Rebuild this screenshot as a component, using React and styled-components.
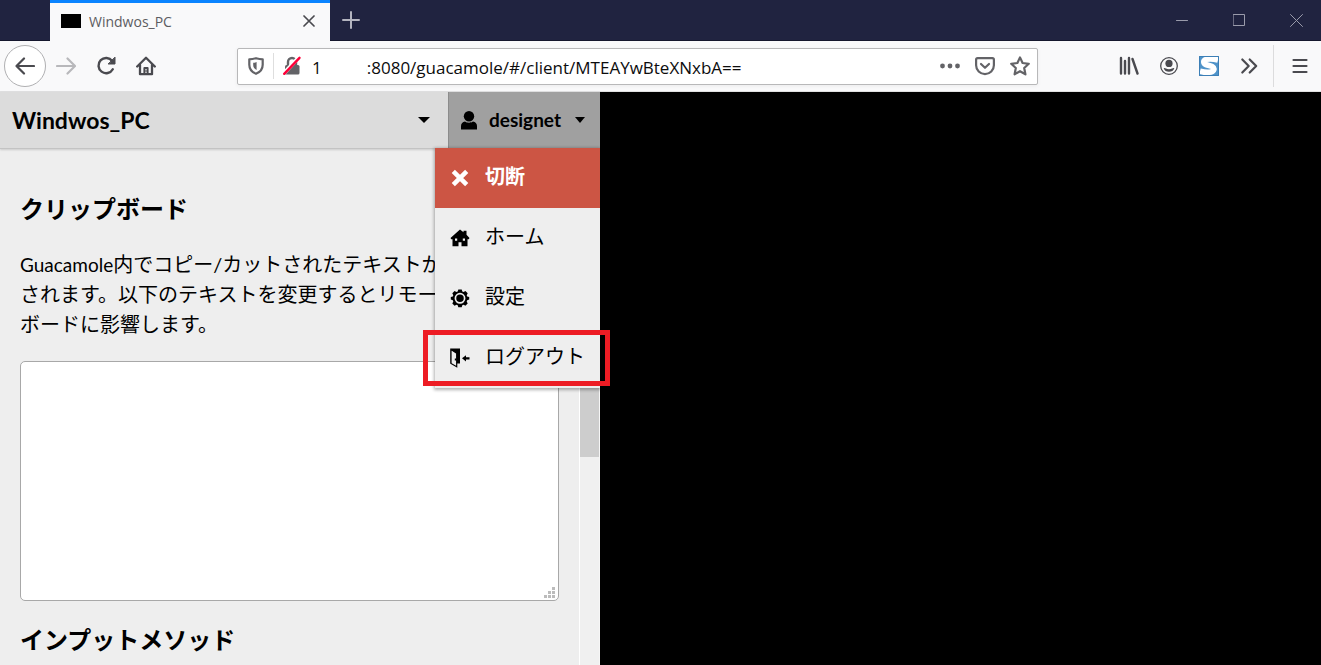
import React from "react";
import styled, { createGlobalStyle, css } from "styled-components";

const GlobalStyle = createGlobalStyle`
  *, *::before, *::after { box-sizing: border-box; }
  body { margin: 0; background: #000; }
  button { margin: 0; padding: 0; border: 0; background: none; color: inherit; font: inherit; cursor: pointer; }
  svg { display: block; flex: none; }
`;

const uiFont = `"Open Sans", "Noto Sans", sans-serif`;
const appFont = `Lato, "Noto Sans CJK JP", sans-serif`;

const Browser = styled.div`
  display: flex;
  flex-direction: column;
  height: 100vh;
  overflow: hidden;
`;

/* ---------- tab strip ---------- */

const TabStrip = styled.header`
  display: flex;
  flex: none;
  height: 41px;
  padding-left: 50px;
  background: #202340;
  border-bottom: 1px solid #15172d;
  font-family: ${uiFont};
`;

const Tab = styled.div`
  display: flex;
  align-items: center;
  width: 280px;
  height: 41px;
  padding: 0 11px 2px 11px;
  background: #f9f9fa;
  border-top: 3px solid #0a84ff;
  color: #5c5c61;
  font-size: 14px;
`;

const Favicon = styled.span`
  width: 20px;
  height: 14px;
  margin-right: 8px;
  background: #000;
`;

const TabTitle = styled.span`
  flex: 1;
`;

const StripButton = styled.button`
  display: flex;
  align-items: center;
  justify-content: center;
  width: ${(p) => p.$width}px;
  color: ${(p) => p.$color};
`;

const WindowControls = styled.div`
  display: flex;
  gap: 7px;
  margin-left: auto;
`;

/* ---------- toolbar ---------- */

const Toolbar = styled.nav`
  display: flex;
  flex: none;
  align-items: center;
  height: 51px;
  padding: 0 1px 0 4px;
  background: #f9f9fa;
  border-bottom: 1px solid #e0e0e1;
  color: #4a4a4f;
`;

const ToolButton = styled.button`
  display: flex;
  flex: none;
  align-items: center;
  justify-content: center;
  width: 40px;
  height: 40px;
  color: ${(p) => (p.$faded ? "#b8b8bb" : "inherit")};
  ${(p) =>
    p.$round &&
    css`
      width: 42px;
      height: 42px;
      background: #fff;
      border: 1px solid #b0b0b2;
      border-radius: 50%;
    `}
`;

const ToolDivider = styled.span`
  width: 1px;
  height: 42px;
  margin: 0 6px 0 4px;
  background: #dcdcdd;
`;

const AddressBar = styled.div`
  display: flex;
  flex: 1;
  align-items: center;
  height: 37px;
  min-width: 0;
  margin: 0 71px;
  background: #fff;
  border: 1px solid #b8b8b9;
  border-radius: 2px;
  box-shadow: 0 1px 4px rgba(0, 0, 0, 0.06);
  color: #636367;
`;

const AddressIcon = styled.button`
  display: flex;
  flex: none;
  align-items: center;
  justify-content: center;
  width: 35px;
  height: 35px;
`;

const AddressDivider = styled.span`
  width: 1px;
  height: 26px;
  background: #dedede;
`;

const AddressField = styled.div`
  position: relative;
  flex: 1;
  min-width: 0;
  padding-left: 3px;
`;

const AddressInput = styled.input`
  display: block;
  width: 100%;
  height: 35px;
  padding: 2px 0 0;
  border: 0;
  outline: 0;
  background: none;
  color: #0c0c0d;
  font-family: ${uiFont};
  font-size: 17px;
  white-space: pre;
`;

const Redaction = styled.span`
  position: absolute;
  top: 4px;
  left: 14px;
  width: 43px;
  height: 26px;
  background: #fff;
`;

/* ---------- page ---------- */

const Page = styled.main`
  display: flex;
  flex: 1;
  min-height: 0;
  background: #000;
  color: #000;
  font-family: ${appFont};
`;

const SidePanel = styled.section`
  display: flex;
  flex-direction: column;
  width: 600px;
  background: #eee;
`;

const PanelHeader = styled.div`
  position: relative;
  z-index: 1;
  display: flex;
  flex: none;
  height: 57px;
  background: #dcdcdc;
  border-bottom: 1px solid #c3c3c3;
  box-shadow: 0 1px 2px rgba(0, 0, 0, 0.15);
`;

const ConnectionButton = styled.button`
  display: flex;
  flex: 1;
  align-items: center;
  justify-content: space-between;
  padding: 0 18px 0 12px;
  font-size: 23px;
  font-weight: 700;
`;

const UserMenu = styled.div`
  position: relative;
  display: flex;
  width: 152px;
`;

const UserButton = styled.button`
  display: flex;
  flex: 1;
  align-items: center;
  padding: 0 15px 0 11px;
  background: #a0a0a0;
  border-left: 1px solid #8c8c8c;
  font-size: 19px;
  font-weight: 700;
`;

const UserName = styled.span`
  flex: 1;
  padding: 0 0 2px 11px;
  text-align: left;
`;

const MenuList = styled.ul`
  position: absolute;
  top: 100%;
  right: 0;
  width: 165px;
  margin: 0;
  padding: 0;
  list-style: none;
  background: #eee;
  box-shadow: 0 1px 3px 1px rgba(0, 0, 0, 0.3);
`;

const MenuItem = styled.li`
  position: relative;
`;

const MenuLink = styled.a`
  display: flex;
  align-items: center;
  gap: 15px;
  height: 60px;
  padding-left: 15px;
  color: ${(p) => (p.$danger ? "#fff" : "#000")};
  background: ${(p) => (p.$danger ? "#cc5544" : "transparent")};
  font-size: 20px;
  font-weight: ${(p) => (p.$danger ? 700 : 400)};
  line-height: 30px;
  text-decoration: none;
  white-space: nowrap;
`;

const MenuLabel = styled.span`
  padding-bottom: 4px;
`;

const Highlight = styled.span`
  position: absolute;
  inset: 2px -10px 2px -12px;
  border: 5px solid #ed1c24;
  pointer-events: none;
`;

const PanelBody = styled.div`
  display: flex;
  flex: 1;
  min-height: 0;
  overflow: hidden;
`;

const PanelContent = styled.div`
  flex: 1;
  min-width: 0;
  padding: 42px 20px 0;
`;

const Heading = styled.h3`
  margin: 0;
  font-size: 24px;
  line-height: 36px;
`;

const Paragraph = styled.p`
  margin: 22px 0;
  font-size: 20px;
  line-height: 30px;
  white-space: nowrap;
`;

const Latin = styled.span`
  font-size: 19px;
  line-height: 20px;
`;

const ClipboardBox = styled.div`
  position: relative;
  margin-bottom: 21px;
`;

const ClipboardArea = styled.textarea`
  display: block;
  width: 100%;
  height: 240px;
  padding: 5px;
  border: 1px solid #a8a8a8;
  border-radius: 5px;
  background: #fff;
  font: inherit;
  resize: none;
`;

const Grip = styled.svg`
  position: absolute;
  right: 4px;
  bottom: 3px;
`;

const ScrollTrack = styled.div`
  width: 21px;
  background: #f0f0f0;
  border-left: 1px solid #fff;
  border-right: 1px solid #f6f6f6;
`;

const ScrollThumb = styled.div`
  height: 308px;
  background: #cdcdcd;
`;

/* ---------- icons ---------- */

const Stroke = ({ size = 20, width = 2, children }) => (
  <svg
    width={size}
    height={size}
    viewBox={`0 0 ${size} ${size}`}
    fill="none"
    stroke="currentColor"
    strokeWidth={width}
    strokeLinecap="round"
    strokeLinejoin="round"
    aria-hidden="true"
  >
    {children}
  </svg>
);

const CloseIcon = () => (
  <Stroke size={12} width={1.7}><path d="M1 1l10 10M11 1L1 11" /></Stroke>
);
const PlusIcon = () => (
  <Stroke size={18} width={2}><path d="M9 1v16M1 9h16" /></Stroke>
);
const MinimizeIcon = () => (
  <Stroke size={12} width={1}><path d="M.5 6.5h11" /></Stroke>
);
const MaximizeIcon = () => (
  <Stroke size={12} width={1}><path d="M.5.5h11v11H.5z" /></Stroke>
);
const WindowCloseIcon = () => (
  <Stroke size={13} width={1}><path d="M.5.5l12 12M12.5.5l-12 12" /></Stroke>
);
const BackIcon = () => (
  <Stroke width={2.2}><path d="M19 10H1.500M9 2.500L1.500 10 9 17.500" /></Stroke>
);
const ForwardIcon = () => (
  <Stroke width={2.2}><path d="M1 10h18M11.500 2.500L19 10l-7.500 7.500" /></Stroke>
);
const ReloadIcon = () => (
  <Stroke width={2.4}>
    <path d="M16.800 13.200A7.600 7.600 0 1 1 16.200 5" />
    <path d="M19 1.500v6.500h-6.500z" fill="currentColor" strokeWidth="1" />
  </Stroke>
);
const HomeIcon = () => (
  <Stroke width={2.3}>
    <path d="M1.200 10.500L10 1.700l8.800 8.800M4 9v9.200h12V9" />
    <path d="M8.400 18v-6h3.200v6" strokeWidth="2" />
    <path d="M10 15h.1" strokeWidth="1.600" />
  </Stroke>
);
const ShieldIcon = () => (
  <Stroke size={18} width={2.2}>
    <path d="M9 1.200c2.300.7 4.500 1.100 6.700 1.100v5.500c0 4-2.600 7.400-6.700 9-4.100-1.600-6.700-5-6.700-9V2.300c2.200 0 4.400-.4 6.700-1.100z" />
    <path d="M9.600 4.900v8.100c-2-1-3.400-2.800-3.400-5V5.700c1.200 0 2.400-.2 3.400-.8z" fill="currentColor" stroke="none" />
  </Stroke>
);
const LockIcon = () => (
  <svg width="20" height="20" viewBox="0 0 20 20" fill="none" aria-hidden="true">
    <rect x="3" y="9" width="14.500" height="9.500" rx="1.500" fill="#636367" />
    <path d="M6 9V6a4 4 0 0 1 8 0v3" stroke="#636367" strokeWidth="2.400" />
    <path d="M2.800 16.400L16.200 2" stroke="#fff" strokeWidth="4" />
    <path d="M2.200 17.800L17.500 1.800" stroke="#ff0039" strokeWidth="2.400" strokeLinecap="round" />
  </svg>
);
const DotsIcon = () => (
  <svg width="20" height="6" viewBox="0 0 20 6" fill="currentColor" aria-hidden="true">
    <circle cx="2.500" cy="3" r="2.400" />
    <circle cx="10" cy="3" r="2.400" />
    <circle cx="17.500" cy="3" r="2.400" />
  </svg>
);
const PocketIcon = () => (
  <Stroke width={2.2}>
    <path d="M2.600 2.200h14.800c.9 0 1.500.6 1.500 1.500v5.600a8.900 8.900 0 0 1-17.800 0V3.700c0-.9.6-1.500 1.500-1.500z" />
    <path d="M6 8l4 3.800L14 8" />
  </Stroke>
);
const StarIcon = () => (
  <Stroke width={2.2}>
    <path d="M10 1.400l2.600 5.600 6.200.8-4.600 4.200 1.200 6.300L10 15.200l-5.400 3.100L5.800 12 1.200 7.800 7.400 7z" />
  </Stroke>
);
const LibraryIcon = () => (
  <Stroke width={2.4}>
    <path d="M2 2v15.500M6 5v12.500M10 2v15.500M13.500 3l5 14.500" />
  </Stroke>
);
const AccountIcon = () => (
  <svg width="20" height="20" viewBox="0 0 20 20" fill="currentColor" aria-hidden="true">
    <circle cx="10" cy="10" r="8.300" fill="none" stroke="currentColor" strokeWidth="1.300" />
    <circle cx="10" cy="7.400" r="3.600" />
    <path d="M4.700 12.200c1.400-.5 2.200 1.100 5.300 1.100s3.900-1.600 5.300-1.100c-.6 2.400-2.900 3.600-5.300 3.600s-4.700-1.200-5.300-3.600z" />
  </svg>
);
const StylishIcon = () => (
  <svg width="20" height="20" viewBox="0 0 20 20" fill="none" aria-hidden="true">
    <rect width="20" height="20" fill="#4f93c9" />
    <path
      d="M19 4C14.500 2.800 10 2.600 7.200 3.400 4 4.400 4 7.200 7 8.600c2 .9 4.600 1 6.400 2 2.600 1.500 1.800 4.500-1.400 5.400-3 .8-7 .3-11-.8"
      stroke="#fff"
      strokeWidth="5.600"
    />
    <path d="M.5.5h19v19H.5z" stroke="#3c7fb6" />
  </svg>
);
const ChevronsIcon = () => (
  <Stroke width={2.2}><path d="M3.300 3.500L9.700 10l-6.400 6.500M10.700 3.500l6.500 6.500-6.500 6.500" /></Stroke>
);
const HamburgerIcon = () => (
  <Stroke width={2.2}><path d="M3.500 4h13M3.500 10h13M3.500 16h13" /></Stroke>
);
const Caret = ({ width = 12 }) => (
  <svg width={width} height="6" viewBox="0 0 12 6" preserveAspectRatio="none" aria-hidden="true">
    <path d="M0 0h12L6 6z" />
  </svg>
);
const PersonIcon = () => (
  <svg width="18" height="20" viewBox="0 0 18 20" aria-hidden="true">
    <ellipse cx="9" cy="6.200" rx="5.200" ry="5.200" />
    <path d="M1 19.500v-3.600c0-2.400 1.600-3.700 4-4.300 2 1.600 6 1.600 8 0 2.400.6 4 1.900 4 4.300v3.600z" />
  </svg>
);
const CrossIcon = () => (
  <svg width="20" height="20" viewBox="0 0 20 20" fill="none" stroke="#fff" strokeWidth="4.500" aria-hidden="true">
    <path d="M3.300 3.300l13.400 13.400M16.700 3.300L3.300 16.700" />
  </svg>
);
const HouseIcon = () => (
  <svg width="20" height="20" viewBox="0 0 20 20" aria-hidden="true">
    <path d="M10 1.500l3.500 2.700V2.800h3v3.900L19.500 10l-.8 1.200h-1.200v7h-6v-4h-3v4h-6v-7H1.300L.5 10z" />
    <path d="M5 10.500h2.200v2.200H5zM12.800 10.500H15v2.200h-2.200z" fill="#eee" />
  </svg>
);
const GearIcon = () => (
  <svg width="20" height="20" viewBox="0 0 20 20" aria-hidden="true">
    <path d="M8.300 1.500h3.400l.6 2 1.300.5 1.800-1 2.300 2.300-1 1.900.5 1.200 2 .6v2.600l-2 .7-.5 1.200 1 1.900-2.300 2.300-1.800-1-1.300.5-.6 2H8.300l-.6-2-1.300-.5-1.800 1-2.300-2.300 1-1.900-.5-1.200-2-.7V9l2-.6.500-1.200-1-1.900 2.300-2.300 1.800 1 1.300-.5z" />
    <circle cx="10" cy="10.300" r="4.600" fill="none" stroke="#eee" strokeWidth="1.700" />
  </svg>
);
const LogoutIcon = () => (
  <svg width="20" height="20" viewBox="0 0 20 20" aria-hidden="true">
    <path d="M.5.5h9.500v15H.5z" />
    <path d="M1 1.500l5.700 3.700v13.600L1 15.500z" fill="#eee" stroke="#000" strokeWidth="1.200" />
    <path d="M4.800 10.500h1.500v2H4.800z" />
    <path d="M12 10.300l4-3v2h3.500v2.200H16v2z" />
  </svg>
);

const menuItems = [
  { label: "切断", icon: CrossIcon, danger: true },
  { label: "ホーム", icon: HouseIcon },
  { label: "設定", icon: GearIcon },
  { label: "ログアウト", icon: LogoutIcon, highlighted: true },
];

export default function App() {
  return (
    <Browser>
      <GlobalStyle />
      <TabStrip>
        <Tab>
          <Favicon />
          <TabTitle>Windwos_PC</TabTitle>
          <StripButton aria-label="Close tab" $width={20} $color="#4a4a4f"><CloseIcon /></StripButton>
        </Tab>
        <StripButton aria-label="New tab" $width={42} $color="#b4b5c0"><PlusIcon /></StripButton>
        <WindowControls>
          <StripButton aria-label="Minimize" $width={50} $color="#9a9bab"><MinimizeIcon /></StripButton>
          <StripButton aria-label="Maximize" $width={50} $color="#9a9bab"><MaximizeIcon /></StripButton>
          <StripButton aria-label="Close window" $width={50} $color="#9a9bab"><WindowCloseIcon /></StripButton>
        </WindowControls>
      </TabStrip>

      <Toolbar>
        <ToolButton aria-label="Back" $round><BackIcon /></ToolButton>
        <ToolButton aria-label="Forward" $faded><ForwardIcon /></ToolButton>
        <ToolButton aria-label="Reload"><ReloadIcon /></ToolButton>
        <ToolButton aria-label="Home"><HomeIcon /></ToolButton>
        <AddressBar>
          <AddressIcon aria-label="Tracking protection"><ShieldIcon /></AddressIcon>
          <AddressDivider />
          <AddressIcon aria-label="Connection not secure"><LockIcon /></AddressIcon>
          <AddressField>
            <AddressInput
              aria-label="Address"
              defaultValue={"1" + " ".repeat(8) + "3:8080/guacamole/#/client/MTEAYwBteXNxbA=="}
            />
            <Redaction />
          </AddressField>
          <AddressIcon aria-label="Page actions"><DotsIcon /></AddressIcon>
          <AddressIcon aria-label="Save to Pocket"><PocketIcon /></AddressIcon>
          <AddressIcon aria-label="Bookmark"><StarIcon /></AddressIcon>
        </AddressBar>
        <ToolButton aria-label="Library"><LibraryIcon /></ToolButton>
        <ToolButton aria-label="Account"><AccountIcon /></ToolButton>
        <ToolButton aria-label="Extension"><StylishIcon /></ToolButton>
        <ToolButton aria-label="More tools"><ChevronsIcon /></ToolButton>
        <ToolDivider />
        <ToolButton aria-label="Open menu"><HamburgerIcon /></ToolButton>
      </Toolbar>

      <Page>
        <SidePanel>
          <PanelHeader>
            <ConnectionButton>
              Windwos_PC
              <Caret />
            </ConnectionButton>
            <UserMenu>
              <UserButton>
                <PersonIcon />
                <UserName>designet</UserName>
                <Caret width={10} />
              </UserButton>
              <MenuList>
                {menuItems.map(({ label, icon: Icon, danger, highlighted }) => (
                  <MenuItem key={label}>
                    <MenuLink href="#" $danger={danger}>
                      <Icon />
                      <MenuLabel>{label}</MenuLabel>
                    </MenuLink>
                    {highlighted && <Highlight />}
                  </MenuItem>
                ))}
              </MenuList>
            </UserMenu>
          </PanelHeader>
          <PanelBody>
            <PanelContent>
              <Heading id="clipboard">クリップボード</Heading>
              <Paragraph>
                <Latin>Guacamole</Latin>内でコピー/カットされたテキストが
                <br />
                されます。以下のテキストを変更するとリモー
                <br />
                ボードに影響します。
              </Paragraph>
              <ClipboardBox>
                <ClipboardArea aria-labelledby="clipboard" />
                <Grip width="11" height="11" viewBox="0 0 11 11" fill="#bcbcbc">
                  <path d="M8 0h3v3H8zM4 4h3v3H4zM8 4h3v3H8zM0 8h3v3H0zM4 8h3v3H4zM8 8h3v3H8z" />
                </Grip>
              </ClipboardBox>
              <Heading>インプットメソッド</Heading>
            </PanelContent>
            <ScrollTrack>
              <ScrollThumb />
            </ScrollTrack>
          </PanelBody>
        </SidePanel>
      </Page>
    </Browser>
  );
}
